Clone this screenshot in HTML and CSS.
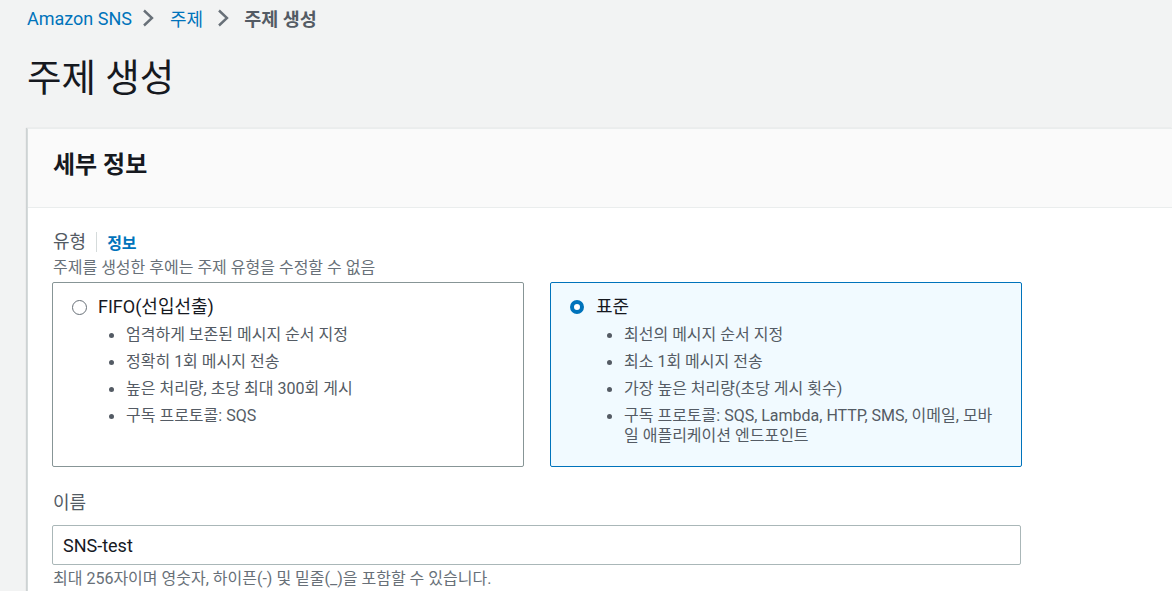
FILE: index.html
```html
<!DOCTYPE html>
<html lang="ko">
<head>
<meta charset="utf-8">
<link rel="stylesheet" href="styles.css">
</head>
<body>
<div class="page">
  <nav class="breadcrumbs">
    <a class="crumb-link">Amazon SNS</a>
    <svg class="chev" width="14" height="18" viewBox="0 0 14 18"><path d="M3 1.5 L11 9 L3 16.5" fill="none" stroke="#687078" stroke-width="2.4"/></svg>
    <a class="crumb-link">주제</a>
    <svg class="chev" width="14" height="18" viewBox="0 0 14 18"><path d="M3 1.5 L11 9 L3 16.5" fill="none" stroke="#687078" stroke-width="2.4"/></svg>
    <span class="crumb-current">주제 생성</span>
  </nav>
  <h1 class="title">주제 생성</h1>
  <section class="card">
    <div class="card-header">세부 정보</div>
    <div class="card-body">
      <div class="label-row">
        <span class="label">유형</span>
        <span class="divider"></span>
        <a class="info">정보</a>
      </div>
      <div class="desc">주제를 생성한 후에는 주제 유형을 수정할 수 없음</div>
      <div class="tiles">
        <div class="tile">
          <div class="tile-head">
            <span class="radio"></span>
            <span class="tile-label">FIFO(선입선출)</span>
          </div>
          <ul class="points">
            <li>엄격하게 보존된 메시지 순서 지정</li>
            <li>정확히 1회 메시지 전송</li>
            <li>높은 처리량, 초당 최대 300회 게시</li>
            <li>구독 프로토콜: SQS</li>
          </ul>
        </div>
        <div class="tile selected">
          <div class="tile-head">
            <span class="radio checked"></span>
            <span class="tile-label">표준</span>
          </div>
          <ul class="points">
            <li>최선의 메시지 순서 지정</li>
            <li>최소 1회 메시지 전송</li>
            <li>가장 높은 처리량(초당 게시 횟수)</li>
            <li>구독 프로토콜: SQS, Lambda, HTTP, SMS, 이메일, 모바일 애플리케이션 엔드포인트</li>
          </ul>
        </div>
      </div>
      <div class="label name-label">이름</div>
      <div class="input">SNS-test</div>
      <div class="hint">최대 256자이며 영숫자, 하이픈(-) 및 밑줄(_)을 포함할 수 있습니다.</div>
    </div>
  </section>
</div>
</body>
</html>
```

FILE: styles.css
```css
html, body {
  margin: 0;
  padding: 0;
}
body {
  background: #f2f3f3;
  font-family: Roboto, "Noto Sans CJK KR", sans-serif;
  color: #16191f;
  overflow: hidden;
}
.page {
  padding-left: 27px;
}
.breadcrumbs {
  height: 36px;
  display: flex;
  align-items: center;
  font-size: 18px;
}
.crumb-link {
  color: #0073bb;
}
.chev {
  margin: 0 15px 0 9px;
}
.crumb-link + .chev + .crumb-link + .chev {
  margin-left: 13px;
  margin-right: 14px;
}
.crumb-current {
  color: #545b64;
  font-weight: 700;
  font-size: 18.5px;
}
.title {
  margin: 20px 0 28px;
  font-size: 37.5px;
  line-height: 44px;
  font-weight: 400;
  color: #16191f;
}
.card {
  background: #fff;
  border-left: 1px solid #d5dbdb;
  border-top: 1px solid #eaeded;
  box-shadow: -1px 0 1px rgba(0,28,36,0.15);
}
.card-header {
  background: #fafafa;
  border-bottom: 1px solid #eaeded;
  padding: 21px 25px 27px;
  font-size: 24px;
  line-height: 30px;
  font-weight: 700;
  color: #16191f;
}
.card-body {
  padding: 23px 24px 40px;
}
.label-row {
  display: flex;
  align-items: center;
  height: 22px;
}
.label {
  font-size: 18px;
  line-height: 22px;
  color: #545b64;
  padding-left: 1px;
}
.divider {
  width: 1px;
  height: 20px;
  background: #d5dbdb;
  margin: 0 10px 0 10px;
}
.info {
  color: #0073bb;
  font-weight: 700;
  font-size: 16px;
}
.desc {
  margin-top: 5px;
  font-size: 16px;
  line-height: 20px;
  color: #687078;
  padding-left: 1px;
}
.tiles {
  margin-top: 4px;
  display: flex;
  gap: 26px;
}
.tile {
  box-sizing: border-box;
  width: 472px;
  height: 185px;
  border: 1px solid #879596;
  border-radius: 2px;
  padding: 13px 20px 12px 19px;
  background: #fff;
}
.tile.selected {
  border-color: #0073bb;
  background: #f1faff;
}
.tile-head {
  display: flex;
  align-items: center;
  height: 22px;
}
.radio {
  box-sizing: border-box;
  width: 15px;
  height: 15px;
  border-radius: 50%;
  border: 1px solid #687078;
  background: #fff;
  margin-right: 11px;
  flex: none;
}
.radio.checked {
  border: 4px solid #0073bb;
  width: 14px;
  height: 14px;
  margin-left: 0;
  margin-right: 12px;
}
.tile-label {
  font-size: 18px;
  line-height: 22px;
  color: #16191f;
}
.points {
  list-style: none;
  margin: 7px 0 0;
  padding: 0 0 0 37px;
}
.points li {
  display: flex;
  font-size: 16px;
  line-height: 20px;
  color: #545b64;
  margin-bottom: 7px;
}
.points li::before {
  content: "";
  flex: none;
  width: 5px;
  height: 5px;
  border-radius: 50%;
  background: #545b64;
  margin: 8px 12px 0 0;
}
.name-label {
  display: block;
  margin-top: 25px;
}
.input {
  box-sizing: border-box;
  margin-top: 11px;
  width: 969px;
  height: 40px;
  border: 1px solid #aab7b8;
  border-radius: 2px;
  background: #fff;
  padding: 0 10px;
  display: flex;
  align-items: center;
  font-size: 18px;
  color: #16191f;
}
.hint {
  margin-top: 4px;
  font-size: 16px;
  line-height: 20px;
  color: #687078;
  padding-left: 1px;
}
```
